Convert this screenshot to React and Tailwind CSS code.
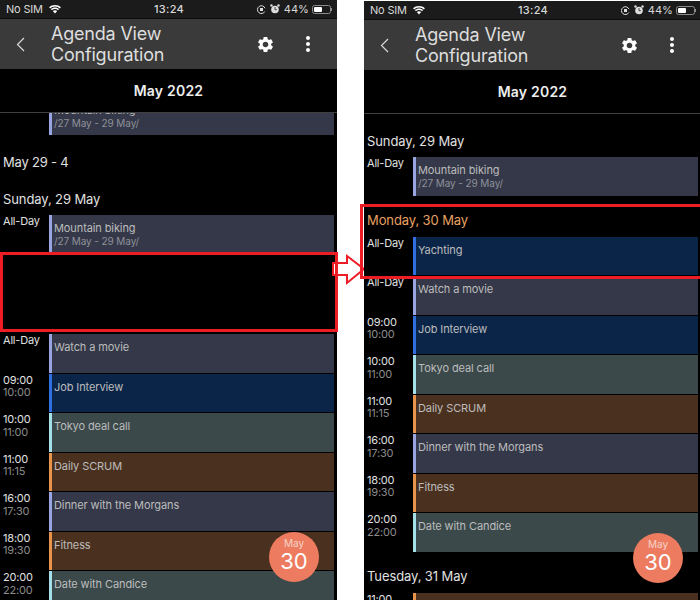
import React from 'react';
import { MdSettings, MdMoreVert } from 'react-icons/md';

const colors = {
  slate: { card: 'bg-[#343848]', bar: 'bg-[#98a5e0]' },
  navy: { card: 'bg-[#0b2549]', bar: 'bg-[#2f6fe0]' },
  teal: { card: 'bg-[#3b494b]', bar: 'bg-[#a5dfe8]' },
  brown: { card: 'bg-[#4a311f]', bar: 'bg-[#e8934a]' },
};

const eveningRows = [
  { from: 'All-Day', title: 'Watch a movie', color: 'slate' },
  { from: '09:00', to: '10:00', title: 'Job Interview', color: 'navy' },
  { from: '10:00', to: '11:00', title: 'Tokyo deal call', color: 'teal' },
  { from: '11:00', to: '11:15', title: 'Daily SCRUM', color: 'brown' },
  { from: '16:00', to: '17:30', title: 'Dinner with the Morgans', color: 'slate' },
  { from: '18:00', to: '19:30', title: 'Fitness', color: 'brown' },
  { from: '20:00', to: '22:00', title: 'Date with Candice', color: 'teal' },
];

function EventRow({ from, to, title, sub, color, className = '' }) {
  const c = colors[color];
  return (
    <div className={`flex h-[38.5px] mb-[1px] shrink-0 ${className}`}>
      <div className="w-[49px] pl-[3px] text-[11px] leading-[12.5px] tracking-[-0.2px]">
        <div className="text-[#e0e0e0]">{from}</div>
        {to && <div className="text-[#8c8c8c]">{to}</div>}
      </div>
      <div className={`flex flex-1 mr-[3px] ${c.card}`}>
        <div className={`w-[3px] ${c.bar}`}></div>
        <div className="pl-[2px] pt-[7px] text-[11px] leading-[13px] tracking-[-0.1px] text-[#bcbcbc]">
          <div>{title}</div>
          {sub && <div className="text-[10px] leading-[11px] mt-[1px] text-[#8e909a]">{sub}</div>}
        </div>
      </div>
    </div>
  );
}

function DayHeading({ children, className = '' }) {
  return <div className={`pl-[3px] text-[13px] leading-[16px] tracking-[-0.1px] text-[#e0e0e0] ${className}`}>{children}</div>;
}

function Wifi() {
  return (
    <svg width="14" height="10" viewBox="0 0 14 10" fill="#fff">
      <path d="M7 2.400c1.900 0 3.600.7 4.900 2l1-1.100C11.300 1.700 9.300.9 7 .9S2.700 1.700 1.100 3.300l1 1.100c1.300-1.300 3-2 4.900-2z" />
      <path d="M7 5c1.200 0 2.300.4 3.100 1.200l1-1.100C10 4 8.600 3.400 7 3.400S4 4 2.900 5.100l1 1.100C4.700 5.400 5.800 5 7 5z" />
      <path d="M7 9.500l2.200-2.400C8.600 6.600 7.800 6.300 7 6.300s-1.600.3-2.200.8L7 9.500z" />
    </svg>
  );
}

function StatusIcons() {
  return (
    <div className="flex items-center">
      <svg width="9" height="9" viewBox="0 0 9 9" fill="none" stroke="#ddd" strokeWidth="1">
        <path d="M7.800 6.500A3.900 3.900 0 1 1 8 3.200" />
        <rect x="3" y="3" width="3" height="3" fill="#ddd" stroke="none" />
      </svg>
      <svg width="10" height="10" viewBox="0 0 10 10" fill="#ddd" className="ml-[4px]">
        <circle cx="5" cy="5.500" r="3.800" />
        <circle cx="1.500" cy="1.500" r="1.200" />
        <circle cx="8.500" cy="1.500" r="1.200" />
        <path d="M5 3v2.700h1.800" fill="none" stroke="#222" strokeWidth=".8" />
      </svg>
      <span className="ml-[4px] text-[11px] leading-[14px] tracking-[0.1px] text-[#d8d8d8]">44%</span>
      <div className="ml-[3px] w-[19px] h-[9px] rounded-[2.500px] border border-[#8a8a8a] p-[1px]">
        <div className="w-[8px] h-full rounded-[1px] bg-white"></div>
      </div>
      <div className="w-[1px] h-[3px] bg-[#8a8a8a]"></div>
    </div>
  );
}

function Phone({ children, className = '' }) {
  return (
    <div className={`relative flex flex-col h-[600px] w-[337px] shrink-0 overflow-hidden bg-black ${className}`}>
      <div className="flex items-center justify-between h-[18px] shrink-0 bg-[#1b1b1b] pl-[6px] pr-[5px] border-b border-[#0c0c0c] box-content">
        <div className="flex items-center gap-[5px] w-[110px]">
          <span className="text-[11px] leading-[14px] tracking-[-0.2px] text-[#d8d8d8]">No SIM</span>
          <Wifi />
        </div>
        <span className="text-[11px] leading-[14px] font-medium tracking-[0.3px] text-[#d8d8d8]">13:24</span>
        <div className="flex justify-end w-[110px]"><StatusIcons /></div>
      </div>
      <div className="flex items-center h-[50px] shrink-0 bg-[#3a3a3a]">
        <div className="flex justify-center w-[51px] pr-[10px]">
          <svg width="10" height="15" viewBox="0 0 10 15" fill="none" stroke="#d8d8d8" strokeWidth="1.200">
            <path d="M8 1L1.500 7.500 8 14" />
          </svg>
        </div>
        <div className="flex-1 text-[18px] leading-[21px] tracking-[-0.2px] text-[#dedede]">Agenda View<br />Configuration</div>
        <MdSettings className="text-white mr-[21px]" size={19} />
        <MdMoreVert className="text-white mr-[17px]" size={24} />
      </div>
      <div className="flex items-center justify-center h-[43px] shrink-0 border-b border-[#3f3f3f] box-content text-[14px] font-semibold tracking-[0.2px] text-[#ededed]">May 2022</div>
      <div className="flex flex-col flex-1 overflow-hidden">{children}</div>
      <div className="absolute left-[269px] top-[532px] flex flex-col items-center justify-center w-[50px] h-[50px] pb-[3px] rounded-full bg-[#ec7b5f] text-white">
        <span className="text-[10px] leading-[11px] text-[#f6d3c8]">May</span>
        <span className="text-[22px] leading-[24px]">30</span>
      </div>
    </div>
  );
}

export default function App() {
  return (
    <div className="relative flex h-[600px] w-[700px] overflow-hidden bg-white font-['Inter',sans-serif]">
      <Phone>
        <EventRow title="Mountain biking" sub="/27 May - 29 May/" color="slate" className="mt-[-16.500px]" />
        <DayHeading className="mt-[18px] text-[11.500px] tracking-[-0.2px]">May 29 - 4</DayHeading>
        <DayHeading className="mt-[21px]">Sunday, 29 May</DayHeading>
        <EventRow from="All-Day" title="Mountain biking" sub="/27 May - 29 May/" color="slate" className="mt-[8px]" />
        <div className="h-[79.500px] shrink-0"></div>
        {eveningRows.map((row) => <EventRow key={row.title} {...row} />)}
      </Phone>
      <div className="relative w-[27px] shrink-0">
        <svg className="absolute left-[-5px] top-[253px] overflow-visible" width="36" height="32" viewBox="0 0 36 32" fill="white" stroke="#ee1c25" strokeWidth="2">
          <path d="M1 10H15V3L32 16 15 30V22H1Z" />
        </svg>
      </div>
      <Phone className="mt-[1px]">
        <DayHeading className="mt-[19px]">Sunday, 29 May</DayHeading>
        <EventRow from="All-Day" title="Mountain biking" sub="/27 May - 29 May/" color="slate" className="mt-[8px]" />
        <DayHeading className="mt-[15px] text-[#e8a060]">Monday, 30 May</DayHeading>
        <EventRow from="All-Day" title="Yachting" color="navy" className="mt-[9px]" />
        {eveningRows.map((row) => <EventRow key={row.title} {...row} />)}
        <DayHeading className="mt-[15px]">Tuesday, 31 May</DayHeading>
        <EventRow from="11:00" to="12:00" title="" color="brown" className="mt-[9px]" />
      </Phone>
      <div className="absolute left-0 top-[252px] w-[338px] h-[80px] border-[3px] border-[#ee1c25]"></div>
      <div className="absolute left-[360px] top-[204px] w-[340px] h-[75px] border-[3px] border-r-0 border-[#ee1c25]"></div>
    </div>
  );
}
